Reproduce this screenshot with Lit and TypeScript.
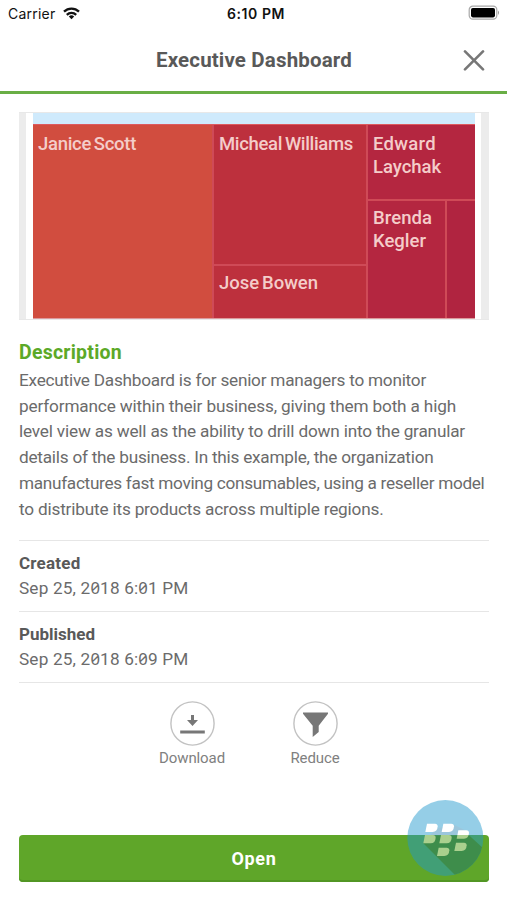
import { LitElement, html, css, svg } from "lit";
import { customElement, property } from "lit/decorators.js";

/* One line of text whose tracking is adjusted so it spans a given width. */
@customElement("fit-line")
class FitLine extends LitElement {
  @property({ type: Number }) width = 0;
  static styles = css`
    :host { display: block; white-space: nowrap; }
    .run { display: inline-block; line-height: inherit; vertical-align: top; }
    .zero { font-family: "Noto Sans", sans-serif; font-feature-settings: "zero" 1; font-size: 0.97em; line-height: 1; }
  `;
  @property() text = "";
  @property({ type: Boolean }) slashed = false;
  render() {
    const parts = this.slashed
      ? this.text.split(/(0)/).map((p) => (p === "0" ? html`<span class="zero">0</span>` : p))
      : this.text;
    return html`<span class="run">${parts}</span>`;
  }
  updated() {
    const run = this.renderRoot.querySelector(".run") as HTMLElement;
    run.style.letterSpacing = "0px";
    const gap = (this.width - run.getBoundingClientRect().width) / this.text.length;
    run.style.letterSpacing = `${gap}px`;
  }
}

const DESCRIPTION: [string, number][] = [
  ["Executive Dashboard is for senior managers to monitor", 407],
  ["performance within their business, giving them both a high", 437],
  ["level view as well as the ability to drill down into the granular", 446],
  ["details of the business. In this example, the organization", 414.5],
  ["manufactures fast moving consumables, using a reseller model", 465.5],
  ["to distribute its products across multiple regions.", 364.5],
];

const PETALS = [[106, 101], [155, 101], [200, 121], [100, 135], [148, 135], [193, 158], [141, 173]];

@customElement("app-root")
class AppRoot extends LitElement {
  static styles = css`
    :host {
      display: flex; flex-direction: column; box-sizing: border-box;
      width: 507px; height: 900px; background: #fff; overflow: hidden;
      position: relative; color: #6b6b6b; font-family: Roboto, sans-serif;
    }
    svg { display: block; }
    .status {
      display: grid; grid-template-columns: 1fr auto 1fr; align-items: center;
      height: 28px; padding: 0 7px 0 8px; color: #111;
      font: 14px/28px Inter, sans-serif;
    }
    .carrier { display: flex; align-items: center; gap: 7px; }
    .carrier svg { margin-top: -1px; }
    .clock { font-weight: 600; padding-left: 4px; }
    .battery { justify-self: end; margin-top: -2px; }
    .header {
      display: grid; grid-template-columns: 1fr auto 1fr; align-items: center;
      height: 63px; border-bottom: 3px solid #69ae45; padding: 0 22px;
    }
    .title { grid-column: 2; font-size: 20.5px; font-weight: 700; color: #595959; padding-left: 1px; }
    .close { justify-self: end; }
    .content { padding: 18px 18px 0 19px; }
    .preview {
      display: grid; grid-template-columns: 7px 7px 442px 6px 8px;
      height: 208px; box-sizing: border-box; border: solid #e8e8e8; border-width: 1px 0;
    }
    .rail { background: #ececec; }
    .chart { display: grid; grid-template-rows: 11px 1px 194px; grid-column: 3; }
    .band { background: #cfeafc; }
    .edge { background: #dd5a5e; }
    .map {
      display: grid; grid-template-columns: 179px 152px 107px; column-gap: 2px;
      background: #cf4a57; border-bottom: 1px solid #dc9a9d; box-sizing: border-box;
      font: 500 18.5px/23px Roboto, sans-serif; word-spacing: -1.5px; color: #f4cdca;
    }
    .cell { padding: 8px 0 0 5px; box-sizing: border-box; overflow: hidden; }
    .orange { background: #d14d3f; }
    .red { background: #bd303d; }
    .crimson { background: #b42640; }
    .dark { background: #b02440; }
    .split { display: grid; grid-template-rows: 139px 1fr; row-gap: 2px; }
    .right { display: grid; grid-template-rows: 74px 1fr; row-gap: 2px; }
    .pair { display: grid; grid-template-columns: 77px 1fr; column-gap: 2px; }
    .split .cell + .cell { padding-top: 6px; }
    .pair .cell { padding-top: 6px; }
    .heading { margin-top: 20px; font-size: 19.5px; line-height: 25px; font-weight: 700; color: #5ca928; }
    .copy { font-size: 17.2px; line-height: 25.7px; margin-top: 3px; }
    .meta { border-top: 1px solid #e6e6e6; height: 71px; padding-top: 9.5px; box-sizing: border-box; font-size: 17.2px; line-height: 25.7px; }
    .list { margin-top: 18px; border-bottom: 1px solid #e6e6e6; display: grid; grid-auto-rows: 71px; }
    .label { font-weight: 700; color: #595959; font-size: 17px; }
    .actions { display: flex; justify-content: center; gap: 56px; padding-top: 18px; margin-left: -1px; }
    .action { display: flex; flex-direction: column; align-items: center; width: 67px; font-size: 15px; line-height: 20px; color: #808080; gap: 2px; }
    .open {
      margin: 67px 0 0; height: 47px; border-radius: 4px; background: #5fa629;
      box-shadow: inset 0 -2px 0 #529624; color: #fff; font-size: 18px; line-height: 24px; font-weight: 700;
      display: flex; align-items: center; justify-content: center;
    }
    .badge { position: absolute; left: 390px; top: 790px; opacity: 0.47; }
  `;

  render() {
    return html`
      <div class="status">
        <div class="carrier">
          <fit-line text="Carrier" .width=${47.5}></fit-line>
          <svg width="17" height="13" viewBox="0 0 17 13" fill="none" stroke="#111" stroke-width="2.3">
            <path d="M1 4.7a10.8 10.8 0 0 1 15 0" />
            <path d="M3.8 7.8a6.8 6.8 0 0 1 9.4 0" />
            <path d="M8.5 12.3L5.8 9.6a3.9 3.9 0 0 1 5.4 0z" fill="#111" stroke="none" />
          </svg>
        </div>
        <fit-line class="clock" text="6:10 PM" .width=${58}></fit-line>
        <svg class="battery" width="32" height="16" viewBox="0 0 32 16">
          <rect x="1.2" y="1.2" width="27.6" height="13" rx="3.6" fill="none" stroke="#a8a8a8" stroke-width="1.2" />
          <rect x="3" y="3" width="24" height="9.4" rx="1.8" fill="#000" />
          <path d="M30 5.5q2 2.2 0 4.4z" fill="#999" />
        </svg>
      </div>
      <div class="header">
        <fit-line class="title" text="Executive Dashboard" .width=${196}></fit-line>
        <svg class="close" width="22" height="22" viewBox="0 0 22 22" stroke="#777" stroke-width="2.6" stroke-linecap="round">
          <path d="M2 2.4l18 18M20 2.4L2 20.4" />
        </svg>
      </div>
      <div class="content">
        <div class="preview">
          <div class="rail"></div><div></div>
          <div class="chart">
            <div class="band"></div>
            <div class="edge"></div>
            <div class="map">
              <div class="cell orange"><fit-line text="Janice Scott" .width=${98}></fit-line></div>
              <div class="split">
                <div class="cell red"><fit-line text="Micheal Williams" .width=${134}></fit-line></div>
                <div class="cell red"><fit-line text="Jose Bowen" .width=${99}></fit-line></div>
              </div>
              <div class="right">
                <div class="cell crimson">
                  <fit-line text="Edward" .width=${63}></fit-line>
                  <fit-line text="Laychak" .width=${68}></fit-line>
                </div>
                <div class="pair">
                  <div class="cell crimson">
                    <fit-line text="Brenda" .width=${59}></fit-line>
                    <fit-line text="Kegler" .width=${53}></fit-line>
                  </div>
                  <div class="dark"></div>
                </div>
              </div>
            </div>
          </div>
          <div></div><div class="rail"></div>
        </div>
        <fit-line class="heading" text="Description" .width=${103}></fit-line>
        <div class="copy">
          ${DESCRIPTION.map(([t, w]) => html`<fit-line .text=${t} .width=${w}></fit-line>`)}
        </div>
        <div class="list">
          <div class="meta">
            <fit-line class="label" text="Created" .width=${61.5}></fit-line>
            <fit-line slashed text="Sep 25, 2018 6:01 PM" .width=${169.5}></fit-line>
          </div>
          <div class="meta">
            <fit-line class="label" text="Published" .width=${76}></fit-line>
            <fit-line slashed text="Sep 25, 2018 6:09 PM" .width=${169.5}></fit-line>
          </div>
        </div>
        <div class="actions">
          <div class="action">
            <svg width="45" height="45" viewBox="0 0 45 45">
              <circle cx="22.5" cy="22.5" r="21.6" fill="#fff" stroke="#c2c2c2" stroke-width="1.4" />
              <path d="M21 14h3v5h4l-5.5 6-5.5-6h4zM10.2 29.5h24.6v3H10.2z" fill="#777" />
            </svg>
            <fit-line text="Download" .width=${66}></fit-line>
          </div>
          <div class="action">
            <svg width="45" height="45" viewBox="0 0 45 45">
              <circle cx="22.5" cy="22.5" r="21.6" fill="#fff" stroke="#c2c2c2" stroke-width="1.4" />
              <path d="M10 11.5h25v1.2l-9.3 12v6.2l-6 5V24.7l-9.7-12z" fill="#777" />
            </svg>
            <fit-line text="Reduce" .width=${49}></fit-line>
          </div>
        </div>
        <div class="open"><fit-line text="Open" .width=${45}></fit-line></div>
      </div>
      <svg class="badge" width="117" height="110" viewBox="0 0 351 330">
        <defs><clipPath id="disc"><circle cx="166" cy="144" r="114" /></clipPath></defs>
        <circle cx="166" cy="144" r="114" fill="#2099ce" />
        <path clip-path="url(#disc)" d="M100 160L210 270H330V220L237 136H120Z" fill="#1a7373" />
        <path clip-path="url(#disc)" d="M141 115L192 104L237 127V136H120Z" fill="#2d88b5" />
        ${PETALS.map(([x, y]) => svg`<path transform="translate(${x} ${y})" d="M5 0H29Q37 0 37 8Q36 25 22 25H0Z" fill="#fff" />`)}
      </svg>
    `;
  }
}
